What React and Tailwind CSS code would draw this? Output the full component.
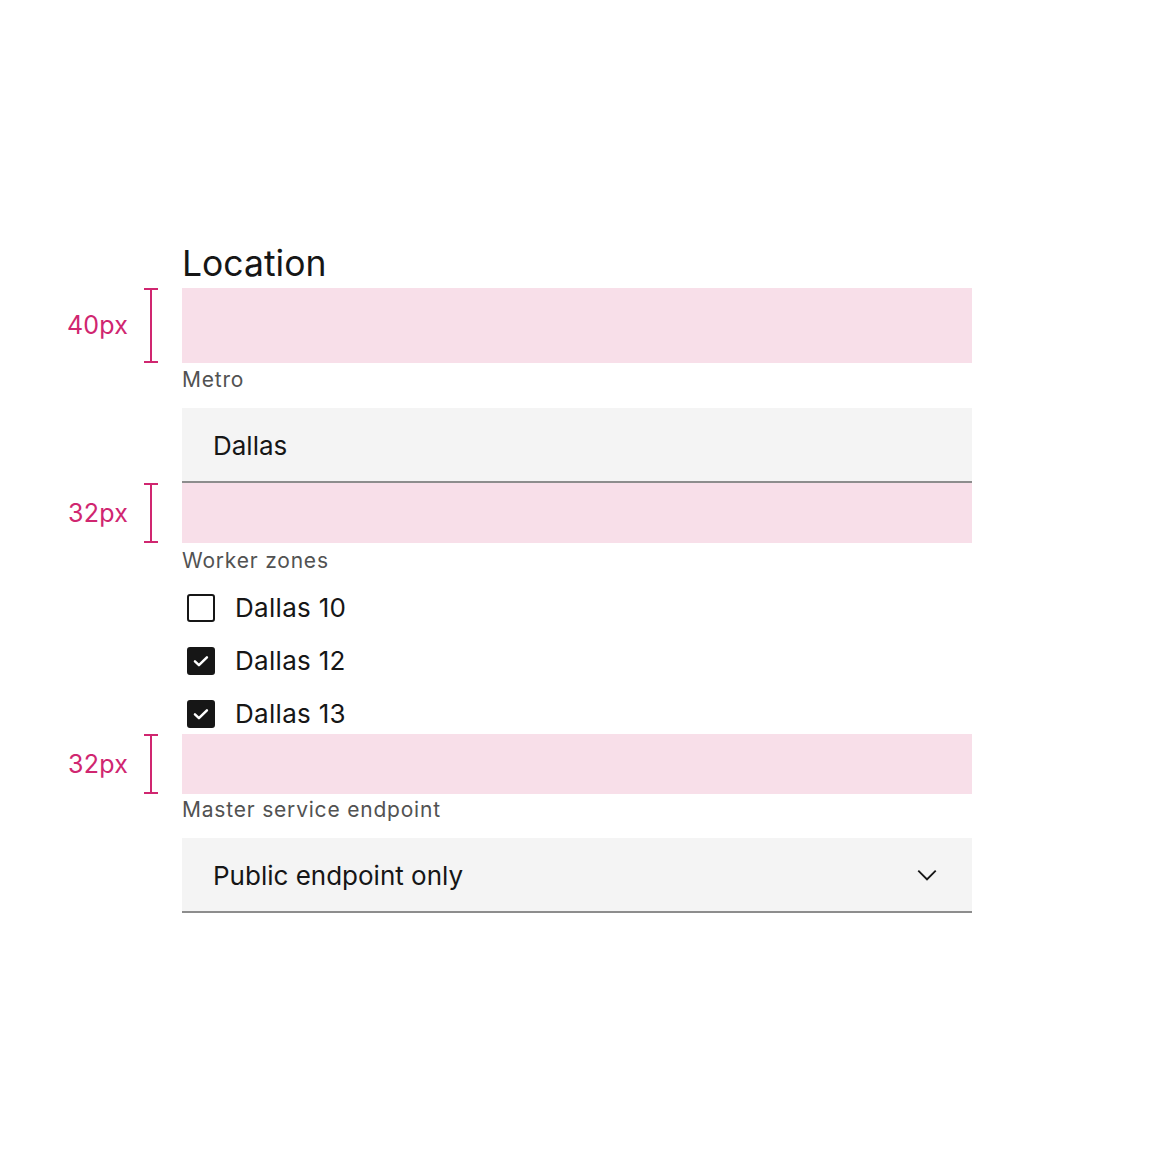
import React from "react";

const font = { fontFamily: "Inter, 'Noto Sans', sans-serif" };

function Bracket({ label, h }) {
  return (
    <div className="flex items-center justify-end pr-[23px]" style={{ height: h }}>
      <span className="text-[25px] leading-none text-[#d02670] mr-[15px] tracking-[0.2px]">{label}</span>
      <svg width="16" height={h} viewBox={`0 0 16 ${h}`} className="block">
        <line x1="8" y1="1" x2="8" y2={h - 1} stroke="#d02670" strokeWidth="2" />
        <line x1="1" y1="1" x2="15" y2="1" stroke="#d02670" strokeWidth="2" />
        <line x1="1" y1={h - 1} x2="15" y2={h - 1} stroke="#d02670" strokeWidth="2" />
      </svg>
    </div>
  );
}

function Check({ checked, label }) {
  return (
    <div className="flex items-center h-[40px]">
      <div
        className={`ml-[5px] w-[28px] h-[28px] rounded-[3px] border-2 border-[#161616] flex items-center justify-center ${checked ? "bg-[#161616]" : "bg-white"}`}
      >
        {checked && (
          <svg width="22" height="22" viewBox="0 0 16 16">
            <path d="M3.6 8.3 L6.5 11 L12.3 5.3" fill="none" stroke="#fff" strokeWidth="1.8" strokeLinecap="round" strokeLinejoin="round" />
          </svg>
        )}
      </div>
      <span className="ml-[20px] text-[26px] leading-none text-[#161616] tracking-[0.3px]">{label}</span>
    </div>
  );
}

export default function App() {
  return (
    <div className="w-[1152px] h-[1152px] bg-white pt-[240px]" style={font}>
      <div className="grid grid-cols-[182px_790px]">
        <div />
        <div className="h-[48px] flex items-end">
          <h1 className="text-[35.5px] leading-[48px] text-[#161616] font-normal">Location</h1>
        </div>

        <Bracket label="40px" h={75} />
        <div className="h-[75px] bg-[#f8dfe9]" />

        <div />
        <div className="h-[30px] mb-[15px] pt-[2px] flex items-center text-[21px] text-[#525252] tracking-[0.8px] leading-none">Metro</div>

        <div />
        <div className="h-[75px] bg-[#f4f4f4] border-b-2 border-[#8d8d8d] flex items-center pl-[31px] pt-[3px] text-[26px] text-[#161616] leading-none">
          Dallas
        </div>

        <Bracket label="32px" h={60} />
        <div className="h-[60px] bg-[#f8dfe9]" />

        <div />
        <div className="h-[30px] mb-[15px] pt-[4px] flex items-center text-[21px] text-[#525252] tracking-[0.8px] leading-none">Worker zones</div>

        <div />
        <div className="flex flex-col gap-[13px]">
          <Check checked={false} label="Dallas 10" />
          <Check checked label="Dallas 12" />
          <Check checked label="Dallas 13" />
        </div>

        <Bracket label="32px" h={60} />
        <div className="h-[60px] bg-[#f8dfe9]" />

        <div />
        <div className="h-[30px] mb-[14px] flex items-center text-[21px] text-[#525252] tracking-[0.8px] leading-none">Master service endpoint</div>

        <div />
        <div className="h-[75px] bg-[#f4f4f4] border-b-2 border-[#8d8d8d] flex items-center justify-between pl-[31px] pr-[30px] text-[26px] text-[#161616] leading-none">
          <span className="pt-[3px]">Public endpoint only</span>
          <svg width="30" height="30" viewBox="0 0 16 16">
            <path d="M8 11L3 6 3.7 5.3 8 9.6 12.3 5.3 13 6z" fill="#161616" />
          </svg>
        </div>
      </div>
    </div>
  );
}
